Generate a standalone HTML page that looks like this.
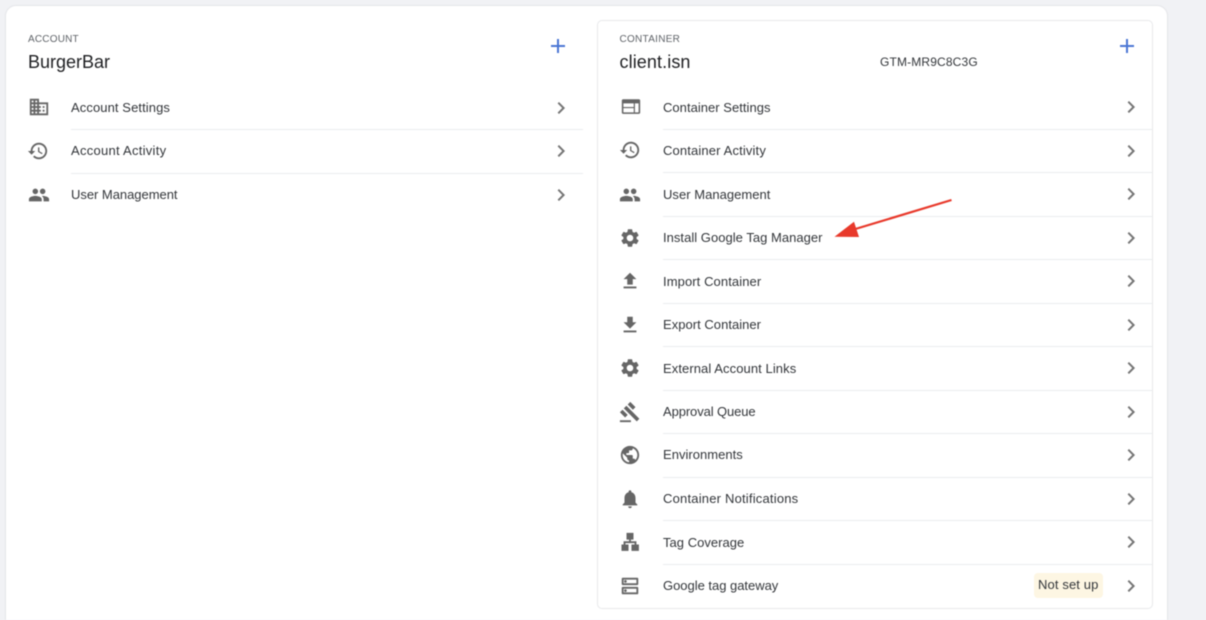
<!DOCTYPE html>
<html><head><meta charset="utf-8"><style>
*{box-sizing:border-box}
html,body{margin:0;padding:0;width:1206px;height:620px;overflow:hidden;background:#f1f2f5;font-family:"Liberation Sans",sans-serif;color:#3c4043}
#w{position:absolute;left:0;top:0;width:1206px;height:620px;filter:blur(.4px);overflow:hidden}
#w div,#w svg{position:absolute}
.outer{left:5px;top:5px;width:1163px;height:640px;background:#fff;border:1.5px solid #e4e5e8;border-radius:11px}
.inner{left:597px;top:20px;width:556px;height:589px;background:#fff;border:1px solid #e8e9eb;border-radius:5px}
.t{font-size:13px;letter-spacing:.03px;line-height:16px;white-space:nowrap;color:#33363a}
.lab{font-size:10px;letter-spacing:.2px;line-height:12px;color:#5f6368;white-space:nowrap}
.name{font-size:18px;line-height:22px;color:#202124;white-space:nowrap;letter-spacing:0}
.d{height:1px;background:#ebecee}
.i{width:22px;height:22px;fill:#666}
.c{width:24px;height:24px;fill:#757575}
.p{width:24px;height:24px;fill:#4a76d4}
</style></head><body><div id="w">
<div class="outer"></div>
<div class="inner"></div>

<div class="lab" style="left:28px;top:34px">ACCOUNT</div>
<div class="name" style="left:28px;top:51px">BurgerBar</div>
<svg class="p" viewBox="0 0 24 24" style="left:546px;top:34px"><path d="M19 13h-6v6h-2v-6H5v-2h6V5h2v6h6v2z"/></svg>

<svg class="i" viewBox="0 0 24 24" style="left:28px;top:96px"><path d="M12 7V3H2v18h20V7H12zM6 19H4v-2h2v2zm0-4H4v-2h2v2zm0-4H4V9h2v2zm0-4H4V5h2v2zm4 12H8v-2h2v2zm0-4H8v-2h2v2zm0-4H8V9h2v2zm0-4H8V5h2v2zm10 12h-8v-2h2v-2h-2v-2h2v-2h-2V9h8v10zm-2-8h-2v2h2v-2zm0 4h-2v2h2v-2z"/></svg>
<div class="t" style="left:71px;top:100px;letter-spacing:.09px">Account Settings</div>
<svg class="c" viewBox="0 0 24 24" style="left:549px;top:96px"><path d="M10 6L8.59 7.41 13.17 12l-4.58 4.59L10 18l6-6z"/></svg>
<div class="d" style="left:71px;top:129px;width:512px"></div>

<svg class="i" viewBox="0 0 24 24" style="left:27px;top:140px"><path d="M13 3c-4.97 0-9 4.03-9 9H1l3.89 3.89.07.14L9 12H6c0-3.87 3.13-7 7-7s7 3.13 7 7-3.13 7-7 7c-1.93 0-3.68-.79-4.94-2.06l-1.42 1.42C8.27 19.99 10.51 21 13 21c4.97 0 9-4.03 9-9s-4.03-9-9-9zm-1 5v5l4.28 2.54.72-1.21-3.5-2.08V8H12z"/></svg>
<div class="t" style="left:71px;top:143px;letter-spacing:.27px">Account Activity</div>
<svg class="c" viewBox="0 0 24 24" style="left:549px;top:139px"><path d="M10 6L8.59 7.41 13.17 12l-4.58 4.59L10 18l6-6z"/></svg>
<div class="d" style="left:71px;top:173px;width:512px"></div>

<svg class="i" viewBox="0 0 24 24" style="left:28px;top:184px"><path d="M16 11c1.66 0 2.99-1.34 2.99-3S17.66 5 16 5c-1.66 0-3 1.34-3 3s1.34 3 3 3zm-8 0c1.66 0 2.99-1.34 2.99-3S9.66 5 8 5C6.34 5 5 6.34 5 8s1.34 3 3 3zm0 2c-2.33 0-7 1.17-7 3.5V19h14v-2.5c0-2.33-4.67-3.5-7-3.5zm8 0c-.29 0-.62.02-.97.05 1.16.84 1.97 1.97 1.97 3.45V19h6v-2.5c0-2.33-4.67-3.5-7-3.5z"/></svg>
<div class="t" style="left:71px;top:187px;letter-spacing:-.03px">User Management</div>
<svg class="c" viewBox="0 0 24 24" style="left:549px;top:183px"><path d="M10 6L8.59 7.41 13.17 12l-4.58 4.59L10 18l6-6z"/></svg>

<div class="lab" style="left:619.5px;top:34px;letter-spacing:.28px">CONTAINER</div>
<div class="name" style="left:619.5px;top:51px;letter-spacing:.1px">client.isn</div>
<div class="t" style="left:880px;top:54px;font-size:12px;letter-spacing:.15px">GTM-MR9C8C3G</div>
<svg class="p" viewBox="0 0 24 24" style="left:1115px;top:34px"><path d="M19 13h-6v6h-2v-6H5v-2h6V5h2v6h6v2z"/></svg>

<svg class="i" viewBox="0 0 24 24" style="left:620px;top:96px"><path fill-rule="evenodd" d="M3.500 3.500h17c1 0 1.500.6 1.500 1.500v13c0 1-.6 1.500-1.500 1.500h-17c-1 0-1.500-.6-1.500-1.500V5c0-1 .6-1.500 1.500-1.500zM3.700 8v4h11.300V8zM3.700 13.200v4.600h11.300v-4.600zM16.300 8v9.800h4V8z"/></svg>
<div class="t" style="left:663px;top:100px">Container Settings</div>
<svg class="c" viewBox="0 0 24 24" style="left:1119px;top:95px"><path d="M10 6L8.59 7.41 13.17 12l-4.58 4.59L10 18l6-6z"/></svg>
<div class="d" style="left:663px;top:129px;width:489px"></div>

<svg class="i" viewBox="0 0 24 24" style="left:619px;top:139px"><path d="M13 3c-4.97 0-9 4.03-9 9H1l3.89 3.89.07.14L9 12H6c0-3.87 3.13-7 7-7s7 3.13 7 7-3.13 7-7 7c-1.93 0-3.68-.79-4.94-2.06l-1.42 1.42C8.27 19.99 10.51 21 13 21c4.97 0 9-4.03 9-9s-4.03-9-9-9zm-1 5v5l4.28 2.54.72-1.21-3.5-2.08V8H12z"/></svg>
<div class="t" style="left:663px;top:143px;letter-spacing:.14px">Container Activity</div>
<svg class="c" viewBox="0 0 24 24" style="left:1119px;top:139px"><path d="M10 6L8.59 7.41 13.17 12l-4.58 4.59L10 18l6-6z"/></svg>
<div class="d" style="left:663px;top:172px;width:489px"></div>

<svg class="i" viewBox="0 0 24 24" style="left:619.300px;top:184px"><path d="M16 11c1.66 0 2.99-1.34 2.99-3S17.66 5 16 5c-1.66 0-3 1.34-3 3s1.34 3 3 3zm-8 0c1.66 0 2.99-1.34 2.99-3S9.66 5 8 5C6.34 5 5 6.34 5 8s1.34 3 3 3zm0 2c-2.33 0-7 1.17-7 3.5V19h14v-2.5c0-2.33-4.67-3.5-7-3.5zm8 0c-.29 0-.62.02-.97.05 1.16.84 1.97 1.97 1.97 3.45V19h6v-2.5c0-2.33-4.67-3.5-7-3.5z"/></svg>
<div class="t" style="left:663px;top:187px">User Management</div>
<svg class="c" viewBox="0 0 24 24" style="left:1119px;top:182px"><path d="M10 6L8.59 7.41 13.17 12l-4.58 4.59L10 18l6-6z"/></svg>
<div class="d" style="left:663px;top:216px;width:489px"></div>

<svg class="i" viewBox="0 0 24 24" style="left:619.300px;top:227px"><path d="M19.14 12.94c.04-.3.06-.61.06-.94 0-.32-.02-.64-.07-.94l2.03-1.58c.18-.14.23-.41.12-.61l-1.92-3.32c-.12-.22-.37-.29-.59-.22l-2.39.96c-.5-.38-1.03-.7-1.62-.94l-.36-2.54c-.04-.24-.24-.41-.48-.41h-3.84c-.24 0-.43.17-.47.41l-.36 2.54c-.59.24-1.13.57-1.62.94l-2.39-.96c-.22-.08-.47 0-.59.22L2.74 8.87c-.12.21-.08.47.12.61l2.03 1.58c-.05.3-.09.63-.09.94s.02.64.07.94l-2.03 1.58c-.18.14-.23.41-.12.61l1.92 3.32c.12.22.37.29.59.22l2.39-.96c.5.38 1.03.7 1.62.94l.36 2.54c.05.24.24.41.48.41h3.84c.24 0 .44-.17.47-.41l.36-2.54c.59-.24 1.13-.56 1.62-.94l2.39.96c.22.08.47 0 .59-.22l1.92-3.32c.12-.22.07-.47-.12-.61l-2.01-1.58zM12 15.6c-1.98 0-3.6-1.62-3.6-3.6s1.62-3.6 3.6-3.6 3.6 1.62 3.6 3.6-1.62 3.6-3.6 3.6z"/></svg>
<div class="t" style="left:663px;top:230px">Install Google Tag Manager</div>
<svg class="c" viewBox="0 0 24 24" style="left:1119px;top:226px"><path d="M10 6L8.59 7.41 13.17 12l-4.58 4.59L10 18l6-6z"/></svg>
<div class="d" style="left:663px;top:259px;width:489px"></div>

<svg class="i" viewBox="0 0 24 24" style="left:619.300px;top:270px"><path d="M9 16h6v-6h4l-7-7-7 7h4zm-4 2h14v2H5z"/></svg>
<div class="t" style="left:663px;top:274px;letter-spacing:.09px">Import Container</div>
<svg class="c" viewBox="0 0 24 24" style="left:1119px;top:269px"><path d="M10 6L8.59 7.41 13.17 12l-4.58 4.59L10 18l6-6z"/></svg>
<div class="d" style="left:663px;top:303px;width:489px"></div>

<svg class="i" viewBox="0 0 24 24" style="left:619.300px;top:314px"><path d="M19 9h-4V3H9v6H5l7 7 7-7zM5 18v2h14v-2H5z"/></svg>
<div class="t" style="left:663px;top:317px">Export Container</div>
<svg class="c" viewBox="0 0 24 24" style="left:1119px;top:313px"><path d="M10 6L8.59 7.41 13.17 12l-4.58 4.59L10 18l6-6z"/></svg>
<div class="d" style="left:663px;top:346px;width:489px"></div>

<svg class="i" viewBox="0 0 24 24" style="left:619.300px;top:357px"><path d="M19.14 12.94c.04-.3.06-.61.06-.94 0-.32-.02-.64-.07-.94l2.03-1.58c.18-.14.23-.41.12-.61l-1.92-3.32c-.12-.22-.37-.29-.59-.22l-2.39.96c-.5-.38-1.03-.7-1.62-.94l-.36-2.54c-.04-.24-.24-.41-.48-.41h-3.84c-.24 0-.43.17-.47.41l-.36 2.54c-.59.24-1.13.57-1.62.94l-2.39-.96c-.22-.08-.47 0-.59.22L2.74 8.87c-.12.21-.08.47.12.61l2.03 1.58c-.05.3-.09.63-.09.94s.02.64.07.94l-2.03 1.58c-.18.14-.23.41-.12.61l1.92 3.32c.12.22.37.29.59.22l2.39-.96c.5.38 1.03.7 1.62.94l.36 2.54c.05.24.24.41.48.41h3.84c.24 0 .44-.17.47-.41l.36-2.54c.59-.24 1.13-.56 1.62-.94l2.39.96c.22.08.47 0 .59-.22l1.92-3.32c.12-.22.07-.47-.12-.61l-2.01-1.58zM12 15.6c-1.98 0-3.6-1.62-3.6-3.6s1.62-3.6 3.6-3.6 3.6 1.62 3.6 3.6-1.62 3.6-3.6 3.6z"/></svg>
<div class="t" style="left:663px;top:361px;letter-spacing:.08px">External Account Links</div>
<svg class="c" viewBox="0 0 24 24" style="left:1119px;top:356px"><path d="M10 6L8.59 7.41 13.17 12l-4.58 4.59L10 18l6-6z"/></svg>
<div class="d" style="left:663px;top:390px;width:489px"></div>

<svg class="i" viewBox="0 0 24 24" style="left:619px;top:401px"><path d="M1 21h12v2H1zM5.245 8.07l2.83-2.827 14.14 14.142-2.828 2.828zM12.317 1l5.657 5.656-2.83 2.83-5.654-5.66zM3.825 9.485l5.657 5.657-2.828 2.828-5.657-5.657z"/></svg>
<div class="t" style="left:663px;top:404px;letter-spacing:-.1px">Approval Queue</div>
<svg class="c" viewBox="0 0 24 24" style="left:1119px;top:400px"><path d="M10 6L8.59 7.41 13.17 12l-4.58 4.59L10 18l6-6z"/></svg>
<div class="d" style="left:663px;top:433px;width:489px"></div>

<svg class="i" viewBox="0 0 24 24" style="left:619.300px;top:444px"><path d="M12 2C6.48 2 2 6.48 2 12s4.48 10 10 10 10-4.48 10-10S17.52 2 12 2zm-1 17.93c-3.95-.49-7-3.85-7-7.93 0-.62.08-1.21.21-1.79L9 15v1c0 1.1.9 2 2 2v1.93zm6.9-2.54c-.26-.81-1-1.39-1.9-1.39h-1v-3c0-.55-.45-1-1-1H8v-2h2c.55 0 1-.45 1-1V7h2c1.1 0 2-.9 2-2v-.41c2.93 1.19 5 4.06 5 7.41 0 2.08-.8 3.97-2.1 5.39z"/></svg>
<div class="t" style="left:663px;top:447px">Environments</div>
<svg class="c" viewBox="0 0 24 24" style="left:1119px;top:443px"><path d="M10 6L8.59 7.41 13.17 12l-4.58 4.59L10 18l6-6z"/></svg>
<div class="d" style="left:663px;top:477px;width:489px"></div>

<svg class="i" viewBox="0 0 24 24" style="left:619.300px;top:488px"><path d="M12 22c1.1 0 2-.9 2-2h-4c0 1.1.89 2 2 2zm6-6v-5c0-3.07-1.64-5.64-4.5-6.32V4c0-.83-.67-1.5-1.5-1.5s-1.5.67-1.5 1.5v.68C7.63 5.36 6 7.92 6 11v5l-2 2v1h16v-1l-2-2z"/></svg>
<div class="t" style="left:663px;top:491px;letter-spacing:.2px">Container Notifications</div>
<svg class="c" viewBox="0 0 24 24" style="left:1119px;top:487px"><path d="M10 6L8.59 7.41 13.17 12l-4.58 4.59L10 18l6-6z"/></svg>
<div class="d" style="left:663px;top:520px;width:489px"></div>

<svg class="i" viewBox="0 0 24 24" style="left:619.300px;top:531px"><path d="M8.200 2h7.600v7.400h-2.800v1.800h6v3.500h2.700v7H13.600v-7h3.400v-1.500H7v1.500h3.400v7H2.700v-7H5v-3.500h6V9.400H8.200z"/></svg>
<div class="t" style="left:663px;top:535px">Tag Coverage</div>
<svg class="c" viewBox="0 0 24 24" style="left:1119px;top:530px"><path d="M10 6L8.59 7.41 13.17 12l-4.58 4.59L10 18l6-6z"/></svg>
<div class="d" style="left:663px;top:564px;width:489px"></div>

<svg class="i" viewBox="0 0 24 24" style="left:619.300px;top:575px"><path d="M19 15v4H5v-4h14m1-2H4c-.55 0-1 .45-1 1v6c0 .55.45 1 1 1h16c.55 0 1-.45 1-1v-6c0-.55-.45-1-1-1zM7 18.500c-.82 0-1.500-.67-1.500-1.500s.68-1.500 1.500-1.500 1.500.67 1.500 1.500-.67 1.500-1.500 1.500zM19 5v4H5V5h14m1-2H4c-.55 0-1 .45-1 1v6c0 .55.45 1 1 1h16c.55 0 1-.45 1-1v-6c0-.55-.45-1-1-1zM7 8.500c-.82 0-1.500-.67-1.500-1.500S6.180 5.500 7 5.500s1.500.68 1.500 1.500S7.830 8.500 7 8.500z"/></svg>
<div class="t" style="left:663px;top:578px;letter-spacing:-.02px">Google tag gateway</div>
<div style="left:1034px;top:573px;width:69px;height:25px;background:#fdf6e3;border-radius:4px"></div>
<div class="t" style="left:1038px;top:577px;letter-spacing:.12px">Not set up</div>
<svg class="c" viewBox="0 0 24 24" style="left:1119px;top:574px"><path d="M10 6L8.59 7.41 13.17 12l-4.58 4.59L10 18l6-6z"/></svg>

<svg width="1206" height="620" viewBox="0 0 1206 620" style="left:0;top:0"><line x1="951.500" y1="200" x2="852" y2="230" stroke="#e8392b" stroke-width="2.200"/><path d="M834.500 236.800L854 221.700L859 237z" fill="#e8392b"/></svg>
</div></body></html>
